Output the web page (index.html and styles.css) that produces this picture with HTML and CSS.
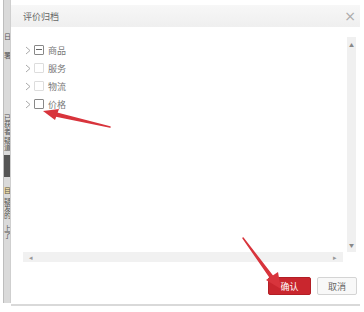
FILE: index.html
```html
<!DOCTYPE html>
<html lang="zh-CN">
<head>
  <meta charset="UTF-8">
  <title>评价归档</title>
  <link rel="stylesheet" href="styles.css">
</head>
<body>
  <div class="page">
    <div class="side">
      <span class="s1">日</span>
      <span class="s2">署</span>
      <span class="s3">已获者</span>
      <span class="s4">疑道</span>
      <span class="s5"></span>
      <span class="s6">目</span>
      <span class="s7">疑发的</span>
      <span class="s8">上了</span>
    </div>

    <div class="dialog">
      <div class="title-bar">
        <span class="title">评价归档</span>
        <span class="close">×</span>
      </div>

      <div class="body">
        <div class="tree-box">
          <div class="tree">
            <div class="row"><svg class="arrow" width="6" height="9" viewBox="0 0 6 9"><path d="M1 1 L5 4.5 L1 8" stroke="#aaa" fill="none"/></svg><span class="check part"></span><span class="label">商品</span></div>
            <div class="row"><svg class="arrow" width="6" height="9" viewBox="0 0 6 9"><path d="M1 1 L5 4.5 L1 8" stroke="#aaa" fill="none"/></svg><span class="check light"></span><span class="label">服务</span></div>
            <div class="row"><svg class="arrow" width="6" height="9" viewBox="0 0 6 9"><path d="M1 1 L5 4.5 L1 8" stroke="#aaa" fill="none"/></svg><span class="check light"></span><span class="label">物流</span></div>
            <div class="row"><svg class="arrow" width="6" height="9" viewBox="0 0 6 9"><path d="M1 1 L5 4.5 L1 8" stroke="#aaa" fill="none"/></svg><span class="check"></span><span class="label">价格</span></div>
          </div>
          <div class="vscroll">
            <span class="up">▲</span>
            <span class="down">▼</span>
          </div>
        </div>
        <div class="hscroll">
          <span>◂</span>
          <span>▸</span>
        </div>
      </div>

      <div class="footer">
        <button class="btn ok">确认</button>
        <button class="btn cancel">取消</button>
      </div>
    </div>
  </div>

  <svg class="pointer pointer-a" width="70" height="24" viewBox="0 0 70 24">
    <path d="M68 19 L14 5 L14 8 Z" fill="#d8343c" stroke="#d8343c" stroke-width="1.5" stroke-linejoin="round"/>
    <path d="M1 3 L17 1 L13 12 Z" fill="#d8343c"/>
  </svg>
  <svg class="pointer pointer-b" width="50" height="56" viewBox="0 0 50 56">
    <path d="M2 2 L33 42 L31 44 Z" fill="#d8343c" stroke="#d8343c" stroke-width="1.5" stroke-linejoin="round"/>
    <path d="M40 53 L25 44 L37 36 Z" fill="#d8343c"/>
  </svg>
</body>
</html>
```

FILE: styles.css
```css
body {
  margin: 0;
  font-family: "Noto Sans CJK SC", "Liberation Sans", sans-serif;
  font-size: 10px;
  color: #555;
  background: #fff;
}
.page {
  display: flex;
  height: 312px;
}
.side {
  width: 6px;
  margin-left: 3px;
  background: #dadada;
  border-left: 1px solid #bdbdbd;
  border-right: 1px solid #cfcfcf;
  display: flex;
  flex-direction: column;
  font-size: 7px;
  line-height: 7px;
  color: #555;
  overflow: hidden;
  margin-bottom: 9px;
}
.side span {
  display: block;
  width: 7px;
  word-break: break-all;
}
.s1 { margin-top: 33px; }
.s2 { margin-top: 12px; }
.s3 { margin-top: 55px; }
.s4 { margin-top: 2px; }
.s5 { margin-top: 4px; height: 22px; background: #555; }
.s6 { margin-top: 10px; background: #e8d9a8; }
.s7 { margin-top: 4px; }
.s8 { margin-top: 6px; }

.dialog {
  flex: 1;
  display: flex;
  flex-direction: column;
  margin-right: 4px;
  margin-bottom: 6px;
  border-bottom: 2px solid #d9d9d9;
}
.title-bar {
  height: 22px;
  margin-top: 5px;
  display: flex;
  align-items: center;
  justify-content: space-between;
  padding: 0 4px 0 12px;
  background: linear-gradient(#f7f7f7, #efefef);
}
.title {
  font-size: 9px;
  color: #666;
}
.close {
  font-size: 14px;
  color: #aaa;
  font-family: "DejaVu Sans", sans-serif;
}
.body {
  flex: 1;
  padding: 10px 4px 0 12px;
  display: flex;
  flex-direction: column;
}
.tree-box {
  flex: 1;
  display: flex;
}
.tree {
  flex: 1;
  padding-top: 4px;
}
.row {
  height: 18px;
  display: flex;
  align-items: center;
}
.arrow {
  margin-left: 2px;
  margin-right: 3px;
}
.check {
  width: 8px;
  height: 8px;
  border: 1px solid #888;
  border-radius: 1px;
  margin-right: 4px;
  position: relative;
  background: #fff;
}
.check.light {
  border-color: #ddd;
}
.check.part::after {
  content: "";
  position: absolute;
  left: 1px;
  right: 1px;
  top: 3px;
  height: 1px;
  background: #666;
}
.label {
  font-size: 9px;
  color: #777;
}
.vscroll {
  width: 9px;
  background: #f0f0f0;
  display: flex;
  flex-direction: column;
  justify-content: space-between;
  align-items: center;
  font-size: 5px;
  color: #888;
  padding: 4px 0;
}
.hscroll {
  height: 10px;
  margin-right: 13px;
  background: #f1f1f1;
  display: flex;
  align-items: center;
  justify-content: space-between;
  padding: 0 6px;
  font-size: 7px;
  color: #999;
}
.footer {
  display: flex;
  justify-content: flex-end;
  gap: 6px;
  padding: 15px 3px 9px 0;
}
.btn {
  font-family: "Noto Sans CJK SC", sans-serif;
  font-size: 9px;
  height: 18px;
  padding: 0;
  border-radius: 2px;
}
.ok {
  width: 43px;
  background: #c9262e;
  border: 1px solid #b21e25;
  color: #fff;
}
.cancel {
  width: 40px;
  background: #f8f8f8;
  border: 1px solid #d4d4d4;
  color: #666;
}
.pointer {
  position: absolute;
}
.pointer-a {
  left: 42px;
  top: 108px;
}
.pointer-b {
  left: 241px;
  top: 236px;
}
```
